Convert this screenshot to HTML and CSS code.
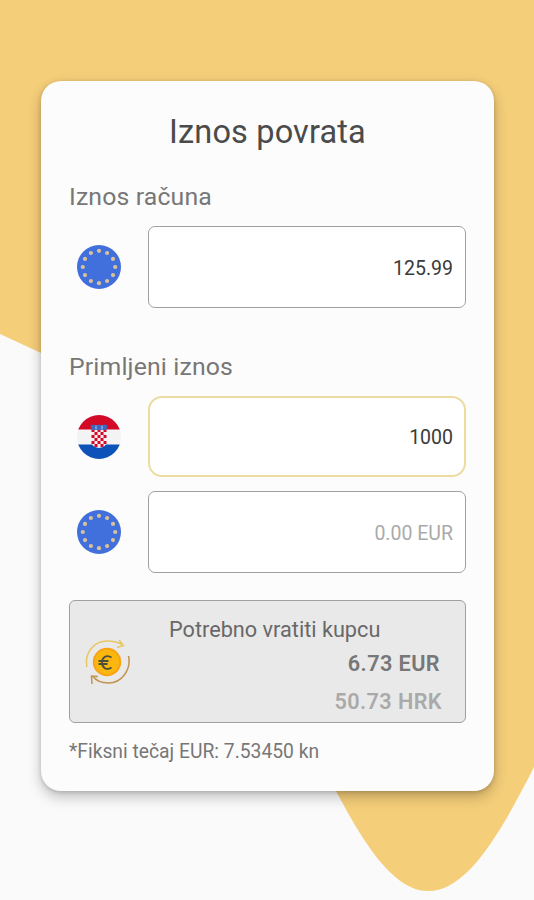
FILE: index.html
```
<!DOCTYPE html>
<html lang="hr">
<head>
  <meta charset="UTF-8">
  <meta name="viewport" content="width=device-width, initial-scale=1.0">
  <title>Iznos povrata</title>
  <link rel="stylesheet" href="styles.css">
</head>
<body>
  <svg class="wave" viewBox="0 0 534 900" aria-hidden="true">
    <path d="M0 0H534V767C498 838 466 891 428 891C392 891 361 838 336 791C250 630 200 430 41 353L0 334Z"/>
  </svg>

  <!-- shared flag of the two EUR rows -->
  <svg class="defs" aria-hidden="true">
    <symbol id="flag-eu" viewBox="0 0 44 44">
      <circle cx="22" cy="22" r="22" fill="#416fdb"/>
      <g fill="#d9c29b">
        <circle cx="22" cy="5.8" r="2.1"/>
        <circle cx="30.1" cy="8" r="2.1"/>
        <circle cx="36" cy="13.9" r="2.1"/>
        <circle cx="38.2" cy="22" r="2.1"/>
        <circle cx="36" cy="30.1" r="2.1"/>
        <circle cx="30.1" cy="36" r="2.1"/>
        <circle cx="22" cy="38.2" r="2.1"/>
        <circle cx="13.9" cy="36" r="2.1"/>
        <circle cx="8" cy="30.1" r="2.1"/>
        <circle cx="5.8" cy="22" r="2.1"/>
        <circle cx="8" cy="13.9" r="2.1"/>
        <circle cx="13.9" cy="8" r="2.1"/>
      </g>
    </symbol>
  </svg>

  <main class="card">
    <h1 class="title">Iznos povrata</h1>

    <h2 class="label">Iznos računa</h2>
    <div class="row row--bill">
      <svg class="flag"><use href="#flag-eu"/></svg>
      <div class="field">125.99</div>
    </div>

    <h2 class="label">Primljeni iznos</h2>
    <div class="row row--hrk">
      <svg class="flag" viewBox="0 0 44 44">
        <clipPath id="round"><circle cx="22" cy="22" r="22"/></clipPath>
        <g clip-path="url(#round)">
          <path fill="#f3f3f3" d="M0 0h44v44H0z"/>
          <path fill="#d20a27" d="M0 0h44v14.5H0z"/>
          <path fill="#0d52b8" d="M0 29.5h44V44H0z"/>
        </g>
        <path fill="#f6eef0" d="M14.5 14h15v13q0 5-7.5 6-7.5-1-7.5-6z"/>
        <path fill="#d20a27" d="M14.5 14h3v3h-3zM20.5 14h3v3h-3zM26.5 14h3v3h-3zM17.5 17h3v3h-3zM23.5 17h3v3h-3zM14.5 20h3v3h-3zM20.5 20h3v3h-3zM26.5 20h3v3h-3zM17.5 23h3v3h-3zM23.5 23h3v3h-3zM14.5 26h3v3h-3zM20.5 26h3v3h-3zM26.5 26h3v3h-3zM17.5 29h3v3h-3zM23.5 29h3v3h-3z"/>
        <path fill="#3f68bd" d="M13.5 10.5l3-1 2.5 1 3-1 3 1 2.5-1 3 1-1.2 4.5H14.7z"/>
        <path fill="#6f9be0" d="M18 10.5h2v4h-2zM24 10.5h2v4h-2z"/>
      </svg>
      <div class="field field--active">1000</div>
    </div>
    <div class="row">
      <svg class="flag"><use href="#flag-eu"/></svg>
      <div class="field field--empty">0.00 EUR</div>
    </div>

    <section class="result">
      <svg class="coin" viewBox="0 0 46 46" fill="none" stroke-width="1.5">
        <path stroke="#e8c765" d="M2 29C-1 15 9 3 22 3c6 0 11 1 16 4M34 2l4.500 5.500-6.500 2"/>
        <path stroke="#c3934f" d="M43.500 18c3 14-7 27-20 27-7 0-13-3-16-7M7 46l-.5-8 6.500.5"/>
        <circle cx="22" cy="24" r="13.2" fill="#fbb60f" stroke="#f8a313" stroke-width="2"/>
        <path stroke="#4a5038" stroke-width="1.8" d="M26.500 19.500c-5-3.500-9.500 0-9.500 5s4.500 8.500 9.500 5M13.500 23h10M13.500 26h9"/>
      </svg>
      <div class="sums">
        <p class="sums__title">Potrebno vratiti kupcu</p>
        <p class="sums__eur">6.73 EUR</p>
        <p class="sums__hrk">50.73 HRK</p>
      </div>
    </section>
    <p class="note">*Fiksni tečaj EUR: 7.53450 kn</p>
  </main>
</body>
</html>
```
FILE: styles.css
```
* {
  box-sizing: border-box;
}
body {
  margin: 0;
  height: 900px;
  padding: 81px 40px 0 41px;
  overflow: hidden;
  background: #fafafa;
  font-family: Roboto, "Liberation Sans", sans-serif;
}
h1, h2, p {
  margin: 0;
  font-weight: 400;
}
.wave {
  position: absolute;
  top: 0;
  left: 0;
  width: 534px;
  height: 900px;
  fill: #f5ce79;
}
.defs {
  position: absolute;
  width: 0;
  height: 0;
}
.card {
  position: relative;
  height: 710px;
  padding: 31px 28px 0;
  border-radius: 20px;
  background: #fcfcfc;
  box-shadow: 0 6px 14px rgba(0, 0, 0, .24), 0 1px 4px rgba(0, 0, 0, .16);
}
.title {
  height: 70px;
  font-size: 32.5px;
  font-weight: 370;
  line-height: 41px;
  letter-spacing: .15px;
  text-align: center;
  color: #4b4b4b;
}
.label {
  height: 43px;
  font-size: 24.8px;
  font-weight: 370;
  line-height: 29px;
  letter-spacing: .15px;
  color: #777;
}
.row {
  display: flex;
  align-items: center;
  justify-content: space-between;
  padding-left: 8px;
}
.title + .label {
  height: 44px;
}
.row--bill {
  margin-bottom: 44px;
}
.row--bill + .label {
  height: 44px;
}
.row--hrk {
  margin-bottom: 14px;
}
.flag {
  width: 44px;
  height: 44px;
}
.field {
  width: 318px;
  height: 82px;
  padding-right: 12px;
  border: 1px solid #a0a0a0;
  border-radius: 7px;
  background: #fff;
  font-size: 19.5px;
  line-height: 83px;
  text-align: right;
  color: #3a3a3a;
}
.field--active {
  height: 81px;
  padding-right: 11px;
  border: 2px solid #eddca2;
  border-radius: 14px;
  line-height: 80px;
}
.field--empty {
  color: #aaa;
}
.result {
  display: flex;
  height: 123px;
  margin-top: 27px;
  padding: 14px 23px 0 15px;
  border: 1px solid #a0a0a0;
  border-radius: 6px;
  background: #e9e9e9;
}
.coin {
  width: 46px;
  height: 46px;
  margin-top: 23px;
}
.sums {
  flex: 1;
  padding-left: 38px;
}
.sums__title {
  height: 34px;
  font-size: 21.7px;
  line-height: 30px;
  color: #686868;
}
.sums__eur, .sums__hrk {
  height: 38px;
  font-size: 21.7px;
  font-weight: 600;
  line-height: 30px;
  letter-spacing: .4px;
  text-align: right;
}
.sums__eur {
  padding-right: 2px;
  color: #777;
}
.sums__hrk {
  color: #aaa;
}
.note {
  margin-top: 16px;
  font-size: 19.3px;
  line-height: 26px;
  color: #777;
}
```
